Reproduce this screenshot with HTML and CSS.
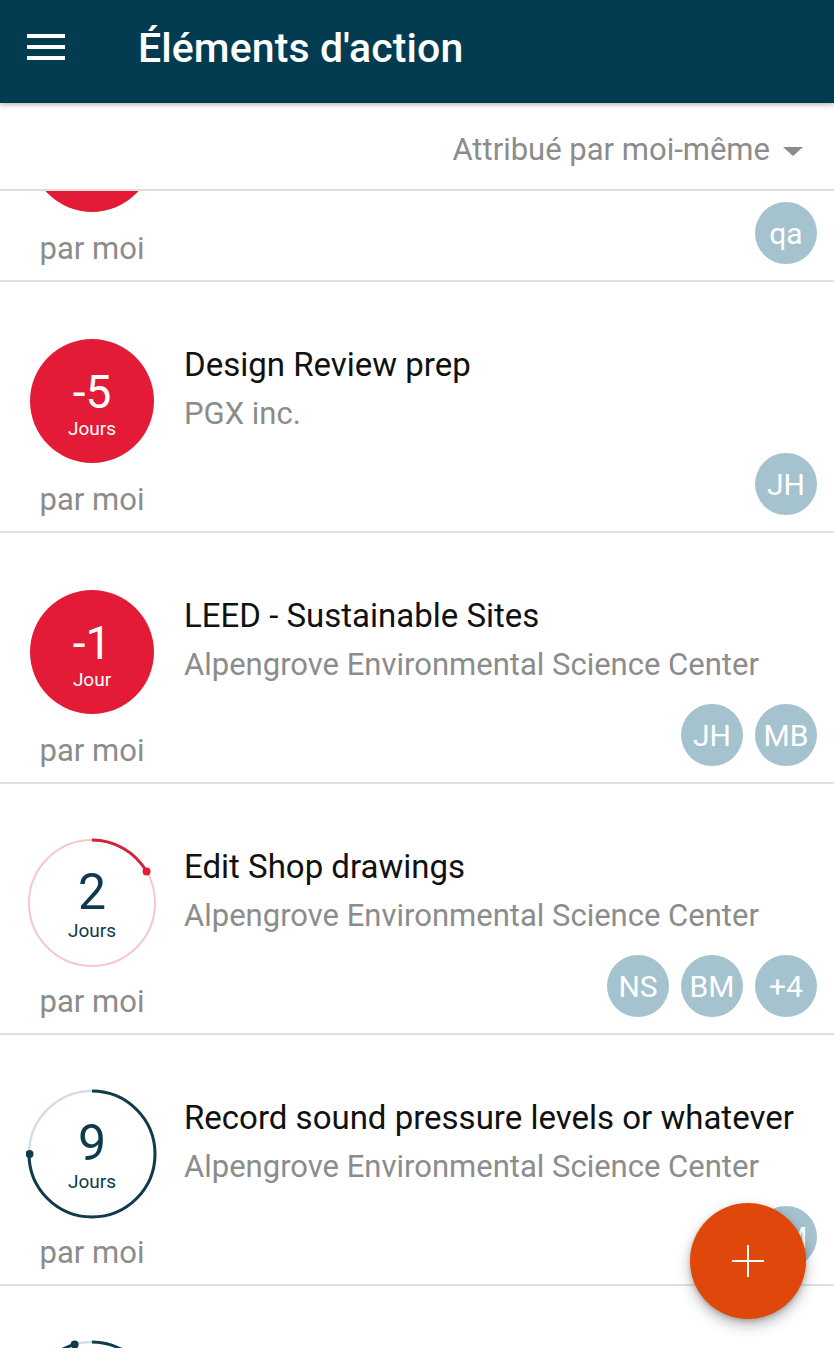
FILE: index.html
```html
<!DOCTYPE html>
<html lang="fr">
<head>
<meta charset="utf-8">
<title>Éléments d'action</title>
<link rel="stylesheet" href="styles.css">
</head>
<body>
<div class="screen">
  <header class="appbar">
    <div class="menu"><span></span><span></span><span></span></div>
    <h1 class="title">Éléments d'action</h1>
  </header>
  <div class="filter">
    <span class="filter-label">Attribué par moi-même</span>
    <span class="caret"></span>
  </div>
  <div class="list">
    <div class="row first">
      <div class="left">
        <div class="badge overdue"></div>
        <div class="by">par moi</div>
      </div>
      <div class="body">
        <div class="avatars"><span class="av">qa</span></div>
      </div>
    </div>

    <div class="row">
      <div class="left">
        <div class="badge overdue"><span class="num">-5</span><span class="unit">Jours</span></div>
        <div class="by">par moi</div>
      </div>
      <div class="body">
        <div class="name">Design Review prep</div>
        <div class="org">PGX inc.</div>
        <div class="avatars"><span class="av">JH</span></div>
      </div>
    </div>

    <div class="row">
      <div class="left">
        <div class="badge overdue"><span class="num">-1</span><span class="unit">Jour</span></div>
        <div class="by">par moi</div>
      </div>
      <div class="body">
        <div class="name">LEED - Sustainable Sites</div>
        <div class="org">Alpengrove Environmental Science Center</div>
        <div class="avatars"><span class="av">JH</span><span class="av">MB</span></div>
      </div>
    </div>

    <div class="row">
      <div class="left">
        <div class="badge ring">
          <svg class="ring-svg" viewBox="0 0 132 132">
            <circle cx="66" cy="66" r="63" class="track pink"/>
            <path d="M66 3 A63 63 0 0 1 120.56 34.5" class="arc red"/>
            <circle cx="120.56" cy="34.5" r="4" class="dot red-dot"/>
          </svg>
          <span class="num">2</span><span class="unit">Jours</span>
        </div>
        <div class="by">par moi</div>
      </div>
      <div class="body">
        <div class="name">Edit Shop drawings</div>
        <div class="org">Alpengrove Environmental Science Center</div>
        <div class="avatars"><span class="av">NS</span><span class="av">BM</span><span class="av">+4</span></div>
      </div>
    </div>

    <div class="row">
      <div class="left">
        <div class="badge ring">
          <svg class="ring-svg" viewBox="0 0 132 132">
            <circle cx="66" cy="66" r="63" class="track light"/>
            <path d="M66 3 A63 63 0 1 1 3 66" class="arc dark"/>
            <circle cx="3.5" cy="66" r="4" class="dot dark-dot"/>
          </svg>
          <span class="num">9</span><span class="unit">Jours</span>
        </div>
        <div class="by">par moi</div>
      </div>
      <div class="body">
        <div class="name">Record sound pressure levels or whatever</div>
        <div class="org">Alpengrove Environmental Science Center</div>
        <div class="avatars"><span class="av">JM</span></div>
      </div>
    </div>

    <div class="row">
      <div class="left">
        <div class="badge ring">
          <svg class="ring-svg" viewBox="0 0 132 132">
            <circle cx="66" cy="66" r="63" class="track light"/>
            <path d="M66 3 A63 63 0 1 1 48.6 5.45" class="arc dark"/>
            <circle cx="48.6" cy="5.45" r="4" class="dot dark-dot"/>
          </svg>
        </div>
      </div>
      <div class="body"></div>
    </div>
  </div>
  <button class="fab" aria-label="Ajouter"><span class="plus"></span></button>
</div>
</body>
</html>
```
FILE: styles.css
```css
* { box-sizing: border-box; }
html, body { margin: 0; padding: 0; }
body {
  width: 834px;
  height: 1348px;
  overflow: hidden;
  background: #fff;
  font-family: Roboto, "Noto Sans", "Liberation Sans", sans-serif;
}
.screen {
  position: relative;
  width: 834px;
  height: 1348px;
  display: flex;
  flex-direction: column;
  overflow: hidden;
}
.appbar {
  height: 103px;
  flex: none;
  background: #033c50;
  display: flex;
  align-items: center;
  position: relative;
  z-index: 2;
  box-shadow: 0 2px 5px rgba(0,0,0,0.28);
}
.menu {
  margin-left: 27px;
  width: 38px;
  height: 26px;
  display: flex;
  flex-direction: column;
  justify-content: space-between;
  margin-top: -9px;
}
.menu span {
  display: block;
  height: 4px;
  background: #fff;
}
.title {
  margin: -8px 0 0 73px;
  color: #fff;
  font-size: 41px;
  font-weight: 500;
  letter-spacing: 0.1px;
}
.filter {
  height: 88px;
  flex: none;
  display: flex;
  align-items: center;
  justify-content: flex-end;
  padding-right: 31px;
  padding-top: 6px;
  border-bottom: 2px solid #dedede;
  color: #8c8c8c;
  font-size: 31px;
  position: relative;
  z-index: 1;
  background: #fff;
}
.caret {
  width: 0;
  height: 0;
  border-left: 10px solid transparent;
  border-right: 10px solid transparent;
  border-top: 9px solid #8c8c8c;
  margin-left: 13px;
  margin-top: 4px;
}
.list {
  flex: 1;
  overflow: hidden;
}
.row {
  height: 251px;
  display: flex;
  border-bottom: 2px solid #e0e0e0;
}
.row.first { margin-top: -160px; }
.left {
  width: 184px;
  flex: none;
  display: flex;
  flex-direction: column;
  align-items: center;
  padding-top: 57px;
}
.badge {
  width: 124px;
  height: 124px;
  border-radius: 50%;
  display: flex;
  flex-direction: column;
  align-items: center;
  justify-content: flex-start;
  position: relative;
}
.badge.overdue {
  background: #e41b36;
  color: #fff;
  padding-top: 33px;
}
.badge .num {
  font-size: 46px;
  line-height: 40px;
}
.badge .unit {
  font-size: 19px;
  line-height: 22px;
  margin-top: 6px;
}
.badge.ring {
  color: #0d3a4c;
  padding-top: 29px;
}
.badge.ring .num {
  font-size: 50px;
  line-height: 44px;
}
.ring-svg {
  position: absolute;
  left: -4px;
  top: -4px;
  width: 132px;
  height: 132px;
}
.track { fill: none; }
.track.pink { stroke: #f6c8cd; stroke-width: 2; }
.track.light { stroke: #d3dee4; stroke-width: 2.5; }
.arc { fill: none; }
.arc.red { stroke: #cf2538; stroke-width: 3; }
.arc.dark { stroke: #0f3b4d; stroke-width: 3; }
.dot.red-dot { fill: #e41b36; }
.dot.dark-dot { fill: #0f3b4d; }
.by {
  margin-top: 19px;
  font-size: 31px;
  line-height: 36px;
  color: #8c8c8c;
}
.body {
  flex: 1;
  display: flex;
  flex-direction: column;
  padding-top: 59px;
  padding-right: 17px;
  padding-bottom: 16px;
  min-width: 0;
}
.name {
  font-size: 33px;
  line-height: 48px;
  color: #111;
  white-space: nowrap;
}
.org {
  font-size: 31px;
  line-height: 50px;
  color: #8c8c8c;
  white-space: nowrap;
}
.avatars {
  margin-top: auto;
  display: flex;
  justify-content: flex-end;
  gap: 12px;
}
.av {
  width: 62px;
  height: 62px;
  border-radius: 50%;
  background: #a5c2cf;
  color: #fff;
  font-size: 30px;
  display: flex;
  align-items: center;
  justify-content: center;
}
.fab {
  position: absolute;
  left: 690px;
  top: 1203px;
  width: 116px;
  height: 116px;
  border-radius: 50%;
  border: none;
  background: #e0480b;
  box-shadow: 0 6px 14px rgba(0,0,0,0.28), 0 2px 4px rgba(0,0,0,0.18);
  padding: 0;
  display: flex;
  align-items: center;
  justify-content: center;
  z-index: 3;
}
.plus {
  position: relative;
  width: 32px;
  height: 32px;
}
.plus::before, .plus::after {
  content: "";
  position: absolute;
  background: #fff;
}
.plus::before { left: 0; right: 0; top: 15px; height: 2px; }
.plus::after { top: 0; bottom: 0; left: 15px; width: 2px; }
```
